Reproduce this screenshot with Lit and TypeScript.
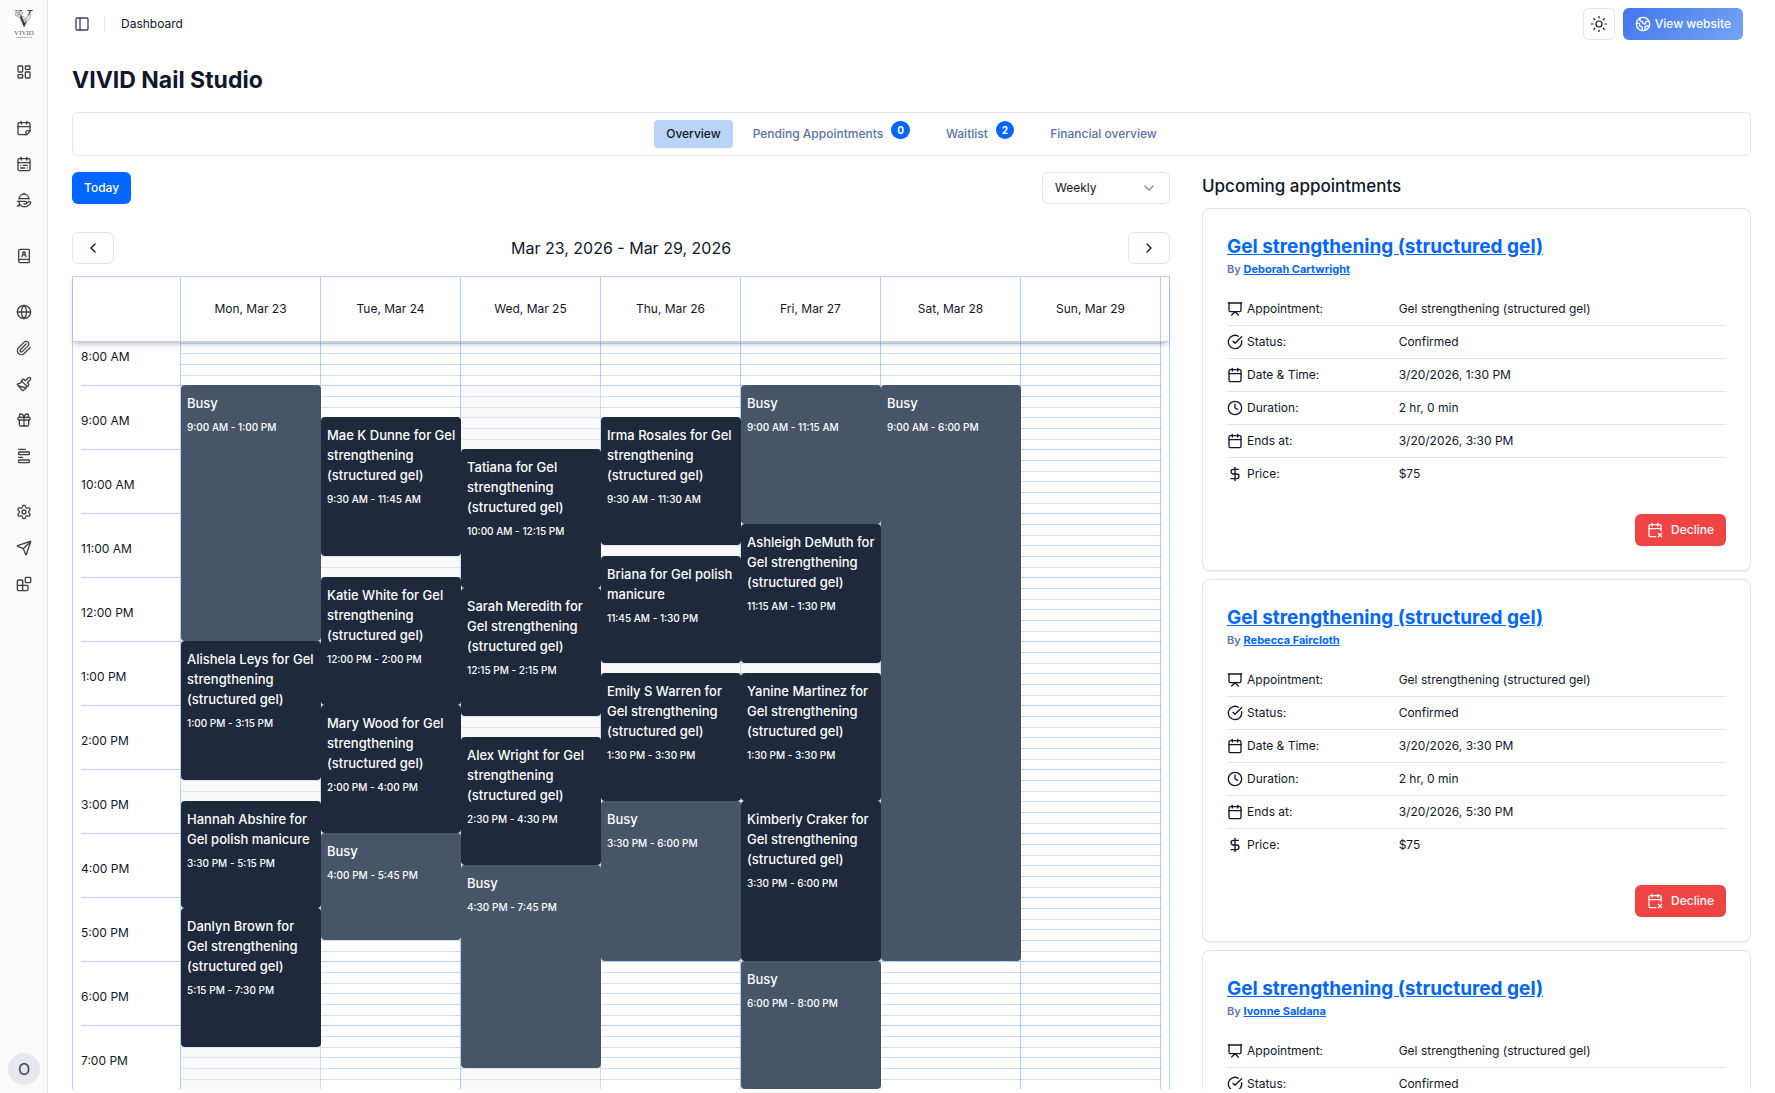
import { LitElement, html, css, svg, nothing } from "lit";
import { customElement, property } from "lit/decorators.js";
import { classMap } from "lit/directives/class-map.js";
import { styleMap } from "lit/directives/style-map.js";

const calendarFrame = svg`<path d="M8 2v4"/><path d="M16 2v4"/><rect width="18" height="18" x="3" y="4" rx="2"/><path d="M3 10h18"/>`;

const icons: Record<string, unknown> = {
  panel: svg`<rect width="18" height="18" x="3" y="3" rx="2"/><path d="M9 3v18"/>`,
  dashboard: svg`<rect width="7" height="9" x="3" y="3" rx="1"/><rect width="7" height="5" x="14" y="3" rx="1"/><rect width="7" height="9" x="14" y="12" rx="1"/><rect width="7" height="5" x="3" y="16" rx="1"/>`,
  calendarFold: svg`<path d="M8 2v4"/><path d="M16 2v4"/><path d="M21 17V6a2 2 0 0 0-2-2H5a2 2 0 0 0-2 2v14a2 2 0 0 0 2 2h11Z"/><path d="M3 10h18"/><path d="M15 22v-4a2 2 0 0 1 2-2h4"/>`,
  calendarRange: svg`${calendarFrame}<path d="M17 14h-6"/><path d="M13 18H7"/><path d="M7 14h.01"/><path d="M17 18h.01"/>`,
  handPlatter: svg`<path d="M12 3V2"/><path d="m15.4 17.4 3.2-2.8a2 2 0 1 1 2.8 2.9l-3.6 3.3c-.7.8-1.7 1.2-2.8 1.2h-4c-1.1 0-2.1-.4-2.8-1.2l-1.302-1.464A1 1 0 0 0 6.151 19H5"/><path d="M2 14h12a2 2 0 0 1 0 4h-2"/><path d="M4 10h16"/><path d="M5 10a7 7 0 0 1 14 0"/><path d="M5 14v6a1 1 0 0 1-1 1H2"/>`,
  bookUser: svg`<path d="M15 13a3 3 0 1 0-6 0"/><path d="M4 19.5v-15A2.5 2.5 0 0 1 6.5 2H19a1 1 0 0 1 1 1v18a1 1 0 0 1-1 1H6.5a1 1 0 0 1 0-5H20"/><circle cx="12" cy="8" r="2"/>`,
  globe: svg`<circle cx="12" cy="12" r="10"/><path d="M12 2a14.5 14.5 0 0 0 0 20 14.5 14.5 0 0 0 0-20"/><path d="M2 12h20"/>`,
  paperclip: svg`<path d="m21.44 11.05-9.19 9.19a6 6 0 0 1-8.49-8.49l8.57-8.57A4 4 0 1 1 18 8.84l-8.59 8.57a2 2 0 0 1-2.83-2.83l8.49-8.48"/>`,
  paintbrush: svg`<path d="m14.622 17.897-10.68-2.913"/><path d="M18.376 2.622a1 1 0 1 1 3.002 3.002L17.36 9.643a.5.5 0 0 0 0 .707l.944.944a2.41 2.41 0 0 1 0 3.408l-.944.944a.5.5 0 0 1-.707 0L8.354 7.348a.5.5 0 0 1 0-.707l.944-.944a2.41 2.41 0 0 1 3.408 0l.944.944a.5.5 0 0 0 .707 0z"/><path d="M9 8c-1.804 2.71-3.97 3.46-6.583 3.948a.507.507 0 0 0-.302.819l7.32 8.883a1 1 0 0 0 1.185.204C12.735 20.405 16 16.792 16 15"/>`,
  gift: svg`<rect x="3" y="8" width="18" height="4" rx="1"/><path d="M12 8v13"/><path d="M19 12v7a2 2 0 0 1-2 2H7a2 2 0 0 1-2-2v-7"/><path d="M7.5 8a2.5 2.5 0 0 1 0-5A4.8 8 0 0 1 12 8a4.8 8 0 0 1 4.5-5 2.5 2.5 0 0 1 0 5"/>`,
  form: svg`<path d="M4 14h6"/><path d="M4 2h10"/><rect x="4" y="18" width="16" height="4" rx="1"/><rect x="4" y="6" width="16" height="4" rx="1"/>`,
  settings: svg`<path d="M9.671 4.136a2.34 2.34 0 0 1 4.659 0 2.34 2.34 0 0 0 3.319 1.915 2.34 2.34 0 0 1 2.33 4.033 2.34 2.34 0 0 0 0 3.831 2.34 2.34 0 0 1-2.33 4.033 2.34 2.34 0 0 0-3.319 1.915 2.34 2.34 0 0 1-4.659 0 2.34 2.34 0 0 0-3.32-1.915 2.34 2.34 0 0 1-2.33-4.033 2.34 2.34 0 0 0 0-3.831A2.34 2.34 0 0 1 6.35 6.051a2.34 2.34 0 0 0 3.319-1.915"/><circle cx="12" cy="12" r="3"/>`,
  send: svg`<path d="M14.536 21.686a.5.5 0 0 0 .937-.024l6.5-19a.496.496 0 0 0-.635-.635l-19 6.5a.5.5 0 0 0-.024.937l7.93 3.18a2 2 0 0 1 1.112 1.11z"/><path d="m21.854 2.147-10.94 10.939"/>`,
  blocks: svg`<path d="M10 22V7a1 1 0 0 0-1-1H4a2 2 0 0 0-2 2v12a2 2 0 0 0 2 2h12a2 2 0 0 0 2-2v-5a1 1 0 0 0-1-1H2"/><rect x="14" y="2" width="8" height="8" rx="1"/>`,
  sun: svg`<g stroke-width="1.6"><circle cx="12" cy="12" r="4"/><path d="M12 2v2"/><path d="M12 20v2"/><path d="m4.93 4.93 1.41 1.41"/><path d="m17.66 17.66 1.41 1.41"/><path d="M2 12h2"/><path d="M20 12h2"/><path d="m6.34 17.66-1.41 1.41"/><path d="m19.07 4.93-1.41 1.41"/></g>`,
  earth: svg`<path d="M21.54 15H17a2 2 0 0 0-2 2v4.54"/><path d="M7 3.34V5a3 3 0 0 0 3 3a2 2 0 0 1 2 2c0 1.1.9 2 2 2a2 2 0 0 0 2-2c0-1.1.9-2 2-2h3.17"/><path d="M11 21.95V18a2 2 0 0 0-2-2a2 2 0 0 1-2-2v-1a2 2 0 0 0-2-2H2.05"/><circle cx="12" cy="12" r="10"/>`,
  chevronDown: svg`<path d="m6 9 6 6 6-6"/>`,
  chevronLeft: svg`<path d="m15 18-6-6 6-6"/>`,
  chevronRight: svg`<path d="m9 18 6-6-6-6"/>`,
  presentation: svg`<path d="M2 3h20"/><path d="M21 3v11a2 2 0 0 1-2 2H5a2 2 0 0 1-2-2V3"/><path d="m7 21 5-5 5 5"/>`,
  check: svg`<path d="M21.801 10A10 10 0 1 1 17 3.335"/><path d="m9 11 3 3L22 4"/>`,
  calendar: calendarFrame,
  clock: svg`<circle cx="12" cy="12" r="10"/><path d="M12 6v6l4 2"/>`,
  dollar: svg`<path d="M12 2v20"/><path d="M17 5H9.5a3.5 3.5 0 0 0 0 7h5a3.5 3.5 0 0 1 0 7H6"/>`,
  calendarX: svg`<path d="M8 2v4"/><path d="M16 2v4"/><path d="M21 13V6a2 2 0 0 0-2-2H5a2 2 0 0 0-2 2v14a2 2 0 0 0 2 2h8"/><path d="M3 10h18"/><path d="m17 22 5-5"/><path d="m17 17 5 5"/>`,
};

const icon = (name: string, size = 16) => html`<svg
  width=${size} height=${size} viewBox="0 0 24 24" fill="none" stroke="currentColor"
  stroke-width="2" stroke-linecap="round" stroke-linejoin="round" aria-hidden="true"
>${icons[name]}</svg>`;

const reset = css`
  *, *::before, *::after { box-sizing: border-box; }
  :where(h1, h2, h3, p, ul, dl, dd, button, select) { margin: 0; padding: 0; }
  svg { display: block; flex: none; }
  button, select { font: inherit; color: inherit; background: none; border: 0; cursor: pointer; }
  a { color: inherit; text-decoration: none; }
  ul { list-style: none; }
`;

@customElement("side-nav")
export class SideNav extends LitElement {
  static styles = [reset, css`
    :host { display: flex; flex-direction: column; gap: 16px; flex: none; width: 48px; padding: 8px 7px 8px 8px; background: #fafafa; border-right: 1px solid #e5e5e5; color: #3f3f46; }
    .logo { width: 32px; height: 32px; border-radius: 8px; background: #fff; overflow: hidden; }
    nav { display: flex; flex-direction: column; gap: 24px; flex: 1; }
    .group { display: flex; flex-direction: column; gap: 4px; }
    .link { display: grid; place-items: center; width: 32px; height: 32px; border-radius: 6px; }
    .avatar { width: 32px; height: 32px; border-radius: 50%; background: #e5e9ef; font-size: 16px; line-height: 32px; text-align: center; }
    .wordmark { font-family: "Liberation Serif", serif; }
  `];

  private groups: [string, string][][] = [
    [["dashboard", "Dashboard"]],
    [["calendarFold", "Appointments"], ["calendarRange", "Schedules"], ["handPlatter", "Services"]],
    [["bookUser", "Customers"]],
    [["globe", "Pages"], ["paperclip", "Assets"], ["paintbrush", "Styling"], ["gift", "Gift cards"], ["form", "Forms"]],
    [["settings", "Settings"], ["send", "Communications"], ["blocks", "Apps"]],
  ];

  render() {
    return html`
      <a class="logo" href="#home" aria-label="VIVID">
        <svg width="32" height="32" viewBox="0 0 32 32">
          <g class="wordmark">
            <text x="16" y="19" font-size="25" text-anchor="middle" fill="#3c3c3c">V</text>
            <text x="16" y="27" font-size="7" text-anchor="middle" fill="#555">VIVID</text>
          </g>
          <g fill="#e4e4e4" stroke="#8a8a8a" stroke-width=".6">
            <ellipse cx="10" cy="3.6" rx="2" ry="1.5"/><ellipse cx="8.6" cy="6" rx="1.6" ry="1.8"/>
            <ellipse cx="13" cy="5.4" rx="1.7" ry="1.9"/><ellipse cx="10.8" cy="8" rx="1.8" ry="1.4"/>
            <circle cx="10.8" cy="5.6" r="1"/>
            <path d="M18 14c-1-3 1-6 4-8 1 3 0 6-4 8Z"/><path d="M17 13c-2-1-3-3-2-5 2 1 3 3 2 5Z"/>
          </g>
          <path d="M8 29.5h16" stroke="#aaa" stroke-width="1" stroke-dasharray="1.5 .8 2.5 .8"/>
        </svg>
      </a>
      <nav aria-label="Main">
        ${this.groups.map((group) => html`<ul class="group">
          ${group.map(([name, label]) => html`<li><a class="link" href="#${name}" aria-label=${label}>${icon(name)}</a></li>`)}
        </ul>`)}
      </nav>
      <button class="avatar" aria-label="Account">O</button>
    `;
  }
}

interface Entry {
  title: string;
  time: string;
  start: number;
  length: number;
}

interface Day {
  label: string;
  work?: [number, number];
  entries: Entry[];
}

const GEL = "Gel strengthening (structured gel)";
const FIRST_HOUR = 8;
const HOURS = 12;

/** Minutes since midnight for a clock such as "1:30 PM". */
const minutes = (clock: string) => {
  const [, h, m, half] = clock.match(/(\d+):(\d+) (AM|PM)/)!;
  return ((+h % 12) + (half === "PM" ? 12 : 0)) * 60 + +m;
};

const entry = (title: string, from: string, to: string): Entry => ({
  title,
  time: `${from} - ${to}`,
  start: minutes(from),
  length: minutes(to) - minutes(from),
});

/** Places a span of minutes on the ten-minute rows of a day. */
const rows = (start: number, length: number) => ({
  gridRow: `${Math.floor((start - FIRST_HOUR * 60) / 10) + 1} / span ${Math.floor(length / 10)}`,
});

const week: Day[] = [
  { label: "Mon, Mar 23", work: [540, 1200], entries: [
    entry("Busy", "9:00 AM", "1:00 PM"),
    entry(`Alishela Leys for ${GEL}`, "1:00 PM", "3:15 PM"),
    entry("Hannah Abshire for Gel polish manicure", "3:30 PM", "5:15 PM"),
    entry(`Danlyn Brown for ${GEL}`, "5:15 PM", "7:30 PM"),
  ] },
  { label: "Tue, Mar 24", work: [570, 1060], entries: [
    entry(`Mae K Dunne for ${GEL}`, "9:30 AM", "11:45 AM"),
    entry(`Katie White for ${GEL}`, "12:00 PM", "2:00 PM"),
    entry(`Mary Wood for ${GEL}`, "2:00 PM", "4:00 PM"),
    entry("Busy", "4:00 PM", "5:45 PM"),
  ] },
  { label: "Wed, Mar 25", work: [540, 1200], entries: [
    entry(`Tatiana for ${GEL}`, "10:00 AM", "12:15 PM"),
    entry(`Sarah Meredith for ${GEL}`, "12:15 PM", "2:15 PM"),
    entry(`Alex Wright for ${GEL}`, "2:30 PM", "4:30 PM"),
    entry("Busy", "4:30 PM", "7:45 PM"),
  ] },
  { label: "Thu, Mar 26", work: [570, 1080], entries: [
    entry(`Irma Rosales for ${GEL}`, "9:30 AM", "11:30 AM"),
    entry("Briana for Gel polish manicure", "11:45 AM", "1:30 PM"),
    entry(`Emily S Warren for ${GEL}`, "1:30 PM", "3:30 PM"),
    entry("Busy", "3:30 PM", "6:00 PM"),
  ] },
  { label: "Fri, Mar 27", work: [540, 1200], entries: [
    entry("Busy", "9:00 AM", "11:15 AM"),
    entry(`Ashleigh DeMuth for ${GEL}`, "11:15 AM", "1:30 PM"),
    entry(`Yanine Martinez for ${GEL}`, "1:30 PM", "3:30 PM"),
    entry(`Kimberly Craker for ${GEL}`, "3:30 PM", "6:00 PM"),
    entry("Busy", "6:00 PM", "8:00 PM"),
  ] },
  { label: "Sat, Mar 28", work: [540, 1080], entries: [entry("Busy", "9:00 AM", "6:00 PM")] },
  { label: "Sun, Mar 29", entries: [] },
];

@customElement("week-calendar")
export class WeekCalendar extends LitElement {
  static styles = [reset, css`
    :host { --line: rgba(26, 110, 235, 0.33); --soft: rgba(0, 100, 255, 0.2); display: flex; flex-direction: column; flex: 1; min-height: 0; border: 1px solid var(--line); border-bottom: 0; }
    .columns { display: grid; grid-template-columns: 108px repeat(7, minmax(0, 1fr)); padding-right: 8px; }
    .head { position: relative; z-index: 1; background: #fff; border-bottom: 1px solid var(--line); box-shadow: 0 4px 6px -1px rgba(0, 0, 0, 0.16), 0 2px 4px -2px rgba(0, 0, 0, 0.16); }
    .head-cell { height: 64px; line-height: 64px; text-align: center; border-right: 1px solid var(--line); }
    .body { flex: 1; min-height: 0; overflow: hidden; }
    .scrolled { margin-top: -21px; }
    .times { padding-left: 8px; border-right: 1px solid var(--line); }
    .hour { height: 64px; padding-top: 27px; border-top: 1px solid var(--line); line-height: 16px; }
    .day {
      display: grid; align-content: start; border-right: 1px solid var(--line);
      background: linear-gradient(
        var(--line) 0 1px, transparent 1px 11px, var(--soft) 11px 12px, transparent 12px 22px,
        var(--soft) 22px 23px, transparent 23px 32px, var(--soft) 32px 33px, transparent 33px 43px,
        var(--soft) 43px 44px, transparent 44px 54px, var(--soft) 54px 55px, transparent 55px) 0 0 / 100% 64px;
      grid-template-rows: repeat(12, 11px 11px 10px 11px 11px 10px);
    }
    .work, .entry { grid-column: 1; margin-right: -1px; }
    .work { background: rgba(240, 240, 240, 0.4); }
    .entry { z-index: 0; display: flex; flex-direction: column; gap: 6px; padding: 8px 5px 0 6px; border-radius: 4px; background: #1e293b; color: #fff; text-align: left; font-weight: 500; overflow: hidden; }
    .busy { background: #475569; }
    .title { font-size: 13px; line-height: 20px; }
    .time { font-size: 10px; line-height: 16px; }
  `];

  render() {
    const hours = Array.from({ length: HOURS }, (_, i) => FIRST_HOUR + i);
    return html`
      <div class="head columns">
        <div class="head-cell"></div>
        ${week.map((day) => html`<div class="head-cell">${day.label}</div>`)}
      </div>
      <div class="body">
        <div class="scrolled columns">
          <div class="times">
            ${hours.map((h) => html`<div class="hour">${((h + 11) % 12) + 1}:00 ${h < 12 ? "AM" : "PM"}</div>`)}
          </div>
          ${week.map((day) => html`<div class="day">
            ${day.work ? html`<div class="work" style=${styleMap(rows(day.work[0], day.work[1] - day.work[0]))}></div>` : nothing}
            ${day.entries.map((e) => html`<button
              class=${classMap({ entry: true, busy: e.title === "Busy" })}
              style=${styleMap(rows(e.start, e.length))}
            ><span class="title">${e.title}</span><span class="time">${e.time}</span></button>`)}
          </div>`)}
        </div>
      </div>
    `;
  }
}

@customElement("appointment-card")
export class AppointmentCard extends LitElement {
  static styles = [reset, css`
    :host { display: flex; flex-direction: column; padding: 24px; border: 1px solid #e5e5e5; border-radius: 8px; background: #fff; box-shadow: 0 1px 2px rgba(0, 0, 0, 0.08); }
    .title { font-size: 19px; line-height: 28px; font-weight: 700; color: #0066ff; }
    .by { font-size: 11px; line-height: 16px; font-weight: 600; color: #5f76ab; }
    .link { color: #0066ff; font-weight: 700; text-decoration: underline; }
    .rows { padding: 16px 0 24px; }
    .row { display: grid; grid-template-columns: 1fr 2fr; gap: 8px; padding: 8px 0; line-height: 16px; }
    .row + .row { border-top: 1px solid #e5e5e5; }
    .label { display: flex; gap: 4px; }
    .decline { display: flex; align-items: center; align-self: flex-end; gap: 8px; height: 32px; padding: 0 12px; border-radius: 6px; background: #ef4444; color: #fff; font-weight: 500; }
  `];

  @property() customer = "";
  @property() starts = "";
  @property() ends = "";

  render() {
    const details: [string, string, string][] = [
      ["presentation", "Appointment:", GEL],
      ["check", "Status:", "Confirmed"],
      ["calendar", "Date & Time:", this.starts],
      ["clock", "Duration:", "2 hr, 0 min"],
      ["calendar", "Ends at:", this.ends],
      ["dollar", "Price:", "$75"],
    ];
    return html`
      <h3 class="title"><a class="link" href="#appointment">${GEL}</a></h3>
      <p class="by">By <a class="link" href="#customer">${this.customer}</a></p>
      <dl class="rows">
        ${details.map(([name, label, value]) => html`<div class="row">
          <dt class="label">${icon(name)}${label}</dt><dd>${value}</dd>
        </div>`)}
      </dl>
      <button class="decline">${icon("calendarX")}Decline</button>
    `;
  }
}

@customElement("app-root")
export class AppRoot extends LitElement {
  static styles = [reset, css`
    :host { display: flex; height: 100vh; overflow: hidden; background: #fff; color: #0f172a; font: 400 12px/16px Inter, sans-serif; }
    .page { display: flex; flex-direction: column; flex: 1; min-width: 0; }
    .bar { display: flex; align-items: center; gap: 8px; height: 48px; padding: 0 32px 0 20px; flex: none; }
    .trigger { display: grid; place-items: center; width: 28px; height: 28px; color: #3f3f56; }
    .rule { width: 1px; height: 16px; background: #e5e5e5; }
    .crumb { flex: 1; padding-left: 8px; }
    .outline { display: grid; place-items: center; height: 32px; border: 1px solid #e5e5e5; border-radius: 6px; background: #fff; }
    .square { width: 32px; }
    .arrow { width: 42px; }
    .website { display: flex; align-items: center; gap: 4px; height: 32px; padding: 0 12px; border-radius: 6px; background: linear-gradient(135deg, #4474ee, #74a6f4); color: #fff; font-weight: 500; }
    .content { display: flex; flex-direction: column; gap: 16px; flex: 1; min-height: 0; padding: 16px 24px 4px; }
    .heading { font-size: 23px; line-height: 32px; font-weight: 700; }
    .tabs { display: flex; justify-content: center; gap: 8px; flex: none; padding: 7px; border: 1px solid #e5e5e5; border-radius: 6px; }
    .tab { display: flex; align-items: center; gap: 8px; height: 28px; padding: 0 12px; border-radius: 4px; font-weight: 500; color: #5a72a8; }
    .selected { background: #bad4f8; color: #0f172a; box-shadow: 0 1px 2px rgba(0, 0, 0, 0.06); }
    .badge { margin: 0 4px 8px 0; padding: 0 6px; border-radius: 9px; background: #0066ff; color: #fff; font-size: 10px; line-height: 18px; font-weight: 700; }
    .split { display: grid; grid-template-columns: minmax(0, 2fr) minmax(0, 1fr); grid-template-rows: minmax(0, 1fr); gap: 32px; flex: 1; min-height: 0; }
    .schedule { display: flex; flex-direction: column; gap: 12px; min-height: 0; }
    .tools { display: flex; justify-content: space-between; padding-bottom: 16px; }
    .today { height: 32px; padding: 0 12px; border-radius: 6px; background: #0066ff; color: #fff; font-weight: 500; }
    .picker { display: grid; align-items: center; width: 128px; }
    .picker > * { grid-area: 1 / 1; }
    .select { appearance: none; width: 100%; height: 32px; padding: 0 12px; border: 1px solid #e5e5e5; border-radius: 6px; background: #fff; }
    .caret { justify-self: end; padding-right: 13px; opacity: 0.5; pointer-events: none; }
    .range { display: flex; align-items: center; justify-content: space-between; }
    .dates { font-size: 16px; line-height: 24px; font-weight: 400; }
    .upcoming { display: flex; flex-direction: column; gap: 8px; min-height: 0; overflow: hidden; }
    .subheading { font-size: 17px; line-height: 28px; font-weight: 500; }
    .upcoming > * { flex: none; }
  `];

  private appointments = [
    ["Deborah Cartwright", "3/20/2026, 1:30 PM", "3/20/2026, 3:30 PM"],
    ["Rebecca Faircloth", "3/20/2026, 3:30 PM", "3/20/2026, 5:30 PM"],
    ["Ivonne Saldana", "3/20/2026, 5:30 PM", "3/20/2026, 7:30 PM"],
  ];

  private tabs: [string, number?][] = [["Overview"], ["Pending Appointments", 0], ["Waitlist", 2], ["Financial overview"]];

  render() {
    return html`
      <side-nav></side-nav>
      <div class="page">
        <header class="bar">
          <button class="trigger" aria-label="Toggle sidebar">${icon("panel")}</button>
          <span class="rule"></span>
          <span class="crumb">Dashboard</span>
          <button class="outline square" aria-label="Theme">${icon("sun", 18)}</button>
          <a class="website" href="#website">${icon("earth")}View website</a>
        </header>
        <main class="content">
          <h1 class="heading">VIVID Nail Studio</h1>
          <div class="tabs" role="tablist">
            ${this.tabs.map(([label, count], i) => html`<button
              class=${classMap({ tab: true, selected: i === 0 })} role="tab" aria-selected=${i === 0}
            >${label}${count === undefined ? nothing : html`<span class="badge">${count}</span>`}</button>`)}
          </div>
          <div class="split">
            <section class="schedule">
              <div class="tools">
                <button class="today">Today</button>
                <label class="picker">
                  <select class="select" aria-label="Calendar view"><option>Weekly</option></select>
                  <span class="caret">${icon("chevronDown")}</span>
                </label>
              </div>
              <div class="range">
                <button class="outline arrow" aria-label="Previous week">${icon("chevronLeft")}</button>
                <h2 class="dates">Mar 23, 2026 - Mar 29, 2026</h2>
                <button class="outline arrow" aria-label="Next week">${icon("chevronRight")}</button>
              </div>
              <week-calendar></week-calendar>
            </section>
            <section class="upcoming">
              <h2 class="subheading">Upcoming appointments</h2>
              ${this.appointments.map(([customer, starts, ends]) => html`<appointment-card
                customer=${customer} starts=${starts} ends=${ends}></appointment-card>`)}
            </section>
          </div>
        </main>
      </div>
    `;
  }
}
